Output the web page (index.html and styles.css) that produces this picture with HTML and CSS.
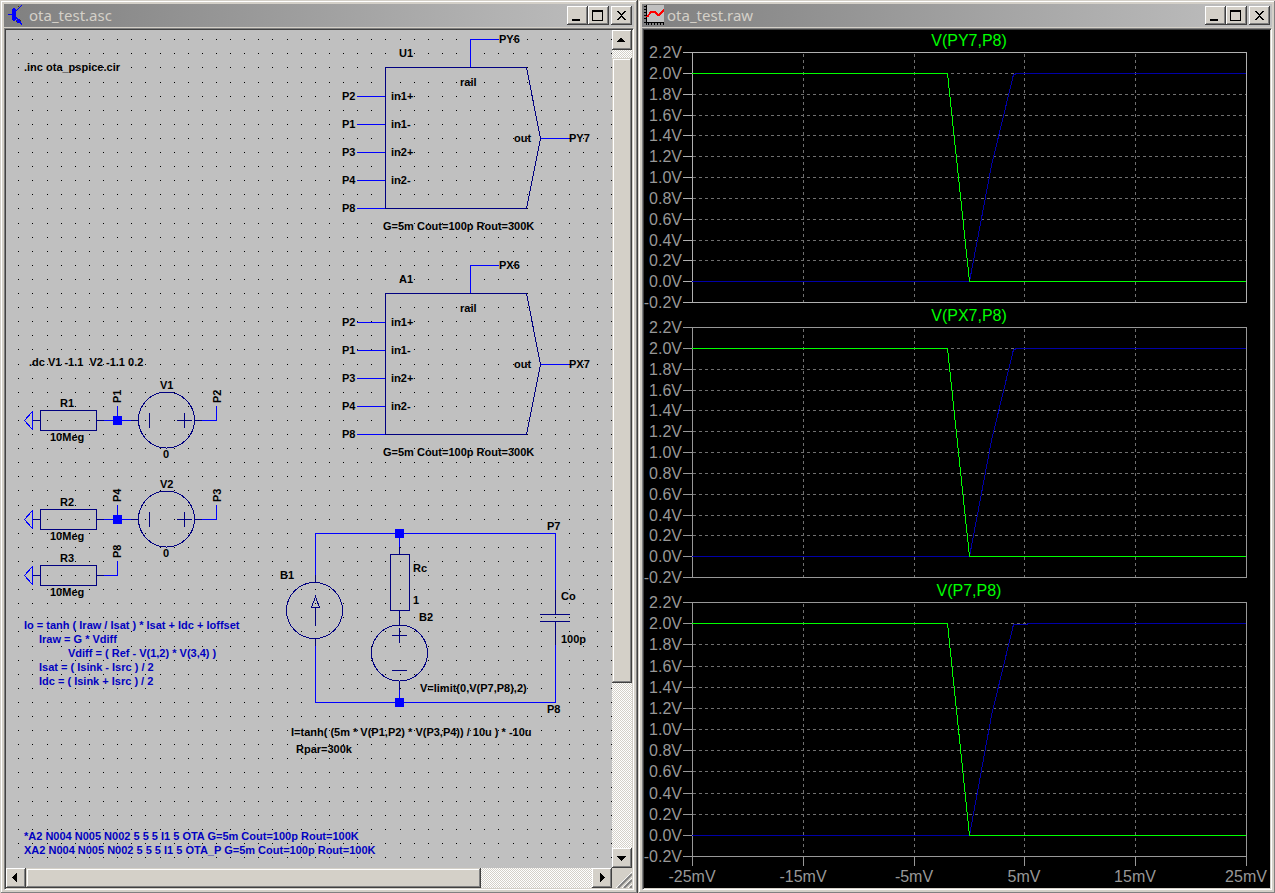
FILE: index.html
```html
<!DOCTYPE html>
<html lang="en">
<head>
    <meta charset="UTF-8">
    <meta name="viewport" content="width=device-width, initial-scale=1.0">
    <title>ota_test</title>
    <link rel="stylesheet" href="styles.css">
</head>
<body>

<div class="desktop">

    <!-- Schematic window -->
    <section class="window">
        <header class="titlebar">
            <svg class="app-icon" viewBox="0 0 20 21" shape-rendering="crispEdges">
                <path class="fill-blue" d="M2 9h4v1H2zM6 4h1V3h2v1h1v11H9v1H7v-1H6zM10 5h1V4h1V3h1V2h1V1h1V0h1v1h-1v1h-1v1h-1v1h-1v1h-1v1h-1zM10 12h1v1h1v1h2v1h1v3h1v2h-1v-1h-1v-1h-3v-1h-1v-2h1v-1h-1z"/>
                <path class="fill-dark" d="M12 1h1v1h-1zM14 15h1v1h-1zM10 16h1v1h-1z"/>
            </svg>
            <h1>ota_test.asc</h1>
            <button class="cap" aria-label="Minimize"><svg viewBox="0 0 21 19"><path d="M5 13h8v2H5z"/></svg></button>
            <button class="cap" aria-label="Maximize"><svg viewBox="0 0 21 19"><path d="M4 4h11v11H4zM5 6v8h9V6z" fill-rule="evenodd"/></svg></button>
            <button class="cap close" aria-label="Close"><svg viewBox="0 0 21 19"><path d="M6 5h2v1h1v1h1v1h1V7h1V6h1V5h2v1h-1v1h-1v1h-1v1h-1v1h1v1h1v1h1v1h1v1h-2v-1h-1v-1h-1v-1h-1v1H9v1H8v1H6v-1h1v-1h1v-1h1v-1h1V9H9V8H8V7H7V6H6z"/></svg></button>
        </header>
        <div class="client schematic">
            <svg class="sheet" viewBox="6 30 606 838" preserveAspectRatio="xMinYMin meet">
                <defs>
                    <g id="ota">
                        <path class="part" d="M385.5 67.5H526.5L540.5 138.5L526.5 208.5H385.5z"/>
                        <path class="wire" d="M357 96.5h28M357 124.5h28M357 152.5h28M357 180.5h28M357 208.5h28M470.5 67V39.5H499M541 138.5H570"/>
                        <text x="342" y="100">P2</text>
                        <text x="342" y="128">P1</text>
                        <text x="342" y="156">P3</text>
                        <text x="342" y="184">P4</text>
                        <text x="342" y="212">P8</text>
                        <text x="391" y="100">in1+</text>
                        <text x="391" y="128">in1-</text>
                        <text x="391" y="156">in2+</text>
                        <text x="391" y="184">in2-</text>
                        <text x="460" y="86">rail</text>
                        <text x="514" y="142">out</text>
                        <text x="383" y="230">G=5m Cout=100p Rout=300K</text>
                    </g>
                    <g id="resistor">
                        <path class="wire" d="M24.5 420.5L32.5 411.5V429.5z"/>
                        <path class="part" d="M33 420.5H40M40.5 410.5h56v20h-56zM97 420.5h7"/>
                        <text x="50" y="441">10Meg</text>
                    </g>
                    <g id="source">
                        <circle class="part" cx="166.5" cy="420" r="28"/>
                        <path class="part" d="M131 420.5h7M149.5 413v15M184.5 413v15M177 420.5h15M195 420.5h7"/>
                        <path class="wire" d="M104 420.5h27M117.5 406v11M202 420.5h14.5V406"/>
                        <path class="fill-blue" d="M113 416h9v9h-9z"/>
                        <text x="163" y="458">0</text>
                    </g>
                </defs>

                <g id="dots"></g>

                <use href="#ota"/>
                <text x="399" y="57">U1</text>
                <text x="499" y="43">PY6</text>
                <text x="569" y="142">PY7</text>

                <use href="#ota" y="226"/>
                <text x="399" y="283">A1</text>
                <text x="499" y="269">PX6</text>
                <text x="569" y="368">PX7</text>

                <text x="24" y="71">.inc ota_pspice.cir</text>
                <text x="29" y="366">.dc V1 -1.1  V2 -1.1 0.2</text>

                <use href="#resistor"/>
                <use href="#source"/>
                <text x="60" y="407">R1</text>
                <text x="160" y="389">V1</text>
                <text transform="translate(121 403) rotate(-90)">P1</text>
                <text transform="translate(221 403) rotate(-90)">P2</text>

                <use href="#resistor" y="99"/>
                <use href="#source" y="99"/>
                <text x="60" y="506">R2</text>
                <text x="160" y="488">V2</text>
                <text transform="translate(121 502) rotate(-90)">P4</text>
                <text transform="translate(221 502) rotate(-90)">P3</text>

                <use href="#resistor" y="155"/>
                <path class="wire" d="M104 575.5H117.5V561"/>
                <text x="60" y="562">R3</text>
                <text transform="translate(121 558) rotate(-90)">P8</text>

                <!-- behavioral model loop -->
                <path class="wire" d="M315.5 575V533.5H555.5V590M555.5 645V702.5H315.5V645M399.5 533v14M399.5 690v12"/>
                <circle class="part" cx="314.5" cy="610.5" r="28"/>
                <path class="part" d="M315.5 575v7M315.5 639v7M315.5 626V607M315.5 596.5L311.5 607.5H319.5z"/>
                <path class="part" d="M399.5 547v7M390.5 554.5h19v56h-19zM399.5 611v14M399.5 681v9"/>
                <circle class="part" cx="399.5" cy="653" r="28"/>
                <path class="part" d="M392 635.5h15M399.5 628v15M392 670.5h15"/>
                <path class="part" d="M555.5 590v24M540 614.5h30M540 621.5h30M555.5 622v23"/>
                <path class="fill-blue" d="M395 529h9v9h-9zM395 698h9v9h-9z"/>
                <text x="280" y="579">B1</text>
                <text x="413" y="572">Rc</text>
                <text x="413" y="604">1</text>
                <text x="419" y="621">B2</text>
                <text x="547" y="530">P7</text>
                <text x="547" y="713">P8</text>
                <text x="561" y="600">Co</text>
                <text x="561" y="643">100p</text>
                <text x="420" y="692">V=limit(0,V(P7,P8),2)</text>
                <text x="291" y="736">I=tanh( (5m * V(P1,P2) * V(P3,P4)) / 10u ) * -10u</text>
                <text x="296" y="753">Rpar=300k</text>

                <g class="comment">
                    <text x="24" y="629">Io = tanh ( Iraw / Isat ) * Isat + Idc + Ioffset</text>
                    <text x="39" y="643">Iraw = G * Vdiff</text>
                    <text x="68" y="657">Vdiff = ( Ref - V(1,2) * V(3,4) )</text>
                    <text x="39" y="671">Isat = ( Isink - Isrc ) / 2</text>
                    <text x="39" y="685">Idc = ( Isink + Isrc ) / 2</text>
                    <text x="24" y="840">*A2 N004 N005 N002 5 5 5 I1 5 OTA G=5m Cout=100p Rout=100K</text>
                    <text x="24" y="854">XA2 N004 N005 N002 5 5 5 I1 5 OTA_P G=5m Cout=100p Rout=100K</text>
                </g>
            </svg>
            <div class="scroll vertical">
                <button class="arrow" aria-label="Scroll up"><svg viewBox="0 0 20 20"><path d="M9 8h1v1h1v1h1v1h1v1H5v-1h1v-1h1V9h1V8z"/></svg></button>
                <div class="track"><div class="thumb"></div></div>
                <button class="arrow" aria-label="Scroll down"><svg viewBox="0 0 20 20"><path d="M5 8h9v1h-1v1h-1v1h-1v1h-1v1H9v-1H8v-1H7v-1H6V9H5z"/></svg></button>
            </div>
            <div class="scroll horizontal">
                <button class="arrow" aria-label="Scroll left"><svg viewBox="0 0 20 20"><path d="M11 5v9h-1v-1H9v-1H8v-1H7v-1H6V9h1V8h1V7h1V6h1V5z"/></svg></button>
                <div class="track"><div class="thumb"></div></div>
                <button class="arrow" aria-label="Scroll right"><svg viewBox="0 0 20 20"><path d="M8 5v9h1v-1h1v-1h1v-1h1v-1h1V9h-1V8h-1V7h-1V6H9V5z"/></svg></button>
            </div>
            <svg class="grip" viewBox="0 0 20 20">
                <path class="grip-light" d="M4 20L20 4M10 20L20 10M16 20L20 16"/>
                <path class="grip-dark" d="M6 20L20 6M12 20L20 12M18 20L20 18"/>
            </svg>
        </div>
    </section>

    <!-- Waveform window -->
    <section class="window">
        <header class="titlebar">
            <svg class="app-icon" viewBox="0 0 20 21" shape-rendering="crispEdges">
                <path class="fill-silver" d="M2 0h18v17H2z"/>
                <path d="M2 0h1v20H2zM0 1h2v1H0zM0 4h2v1H0zM0 7h2v1H0zM0 10h2v1H0zM0 13h2v1H0zM0 17h20v1H0zM4 18h1v2H4zM7 18h1v2H7zM10 18h1v2h-1zM13 18h1v2h-1zM16 18h1v2h-1zM19 18h1v2h-1z"/>
                <path class="curve" d="M3 12L7 7h4l3 3h1l5-5"/>
            </svg>
            <h1>ota_test.raw</h1>
            <button class="cap" aria-label="Minimize"><svg viewBox="0 0 21 19"><path d="M5 13h8v2H5z"/></svg></button>
            <button class="cap" aria-label="Maximize"><svg viewBox="0 0 21 19"><path d="M4 4h11v11H4zM5 6v8h9V6z" fill-rule="evenodd"/></svg></button>
            <button class="cap close" aria-label="Close"><svg viewBox="0 0 21 19"><path d="M6 5h2v1h1v1h1v1h1V7h1V6h1V5h2v1h-1v1h-1v1h-1v1h-1v1h1v1h1v1h1v1h1v1h-2v-1h-1v-1h-1v-1h-1v1H9v1H8v1H6v-1h1v-1h1v-1h1v-1h1V9H9V8H8V7H7V6H6z"/></svg></button>
        </header>
        <div class="client waves">
            <svg id="plots" viewBox="644 30 626 858" preserveAspectRatio="xMinYMin meet"></svg>
        </div>
    </section>

</div>

<script>
    // schematic grid
    var dots = '';
    for (var row = 0; row < 59; row++) {
        for (var col = 0; col < 43; col++) {
            var dx = Math.floor(18.8 + col * 14.12);
            var dy = Math.floor(39.75 + row * 14.1);
            dots += 'M' + dx + ' ' + dy + 'h1v1h-1z';
        }
    }
    document.getElementById('dots').innerHTML = '<path class="dots" d="' + dots + '"/>';

    // waveform panes, top / bottom are the 2.2V and -0.2V lines
    var panes = [
        { title: 'V(PY7,P8)', top: 52, bottom: 302, cls: 'active', settle: 1015 },
        { title: 'V(PX7,P8)', top: 327, bottom: 577, cls: '', settle: 1015 },
        { title: 'V(P7,P8)', top: 602, bottom: 856, cls: '', settle: 1027 }
    ];
    var xTicks = [692, 803, 914, 1024, 1135, 1246];
    var xLabels = ['-25mV', '-15mV', '-5mV', '5mV', '15mV', '25mV'];
    var left = xTicks[0], right = xTicks[5];

    function drawPane(pane) {
        var step = (pane.bottom - pane.top) / 12;
        var ys = [];
        var grid = '', axis = '', labels = '';
        for (var i = 0; i <= 12; i++) {
            var y = Math.round(pane.top + i * step) + 0.5;
            ys.push(y);
            axis += 'M683 ' + y + 'H' + left;
            if (i > 0 && i < 12) {
                grid += 'M' + (left + 1) + ' ' + y + 'H' + right;
            }
            labels += '<text class="label end" x="682" y="' + (y + 5.5) + '">' + ((11 - i) / 5).toFixed(1) + 'V</text>';
        }
        for (var j = 1; j < 5; j++) {
            grid += 'M' + (xTicks[j] + 0.5) + ' ' + (pane.top + 2) + 'V' + pane.bottom;
        }
        axis += 'M' + (left + 0.5) + ' ' + ys[0] + 'H' + (right + 0.5) + 'V' + ys[12] + 'H' + (left + 0.5) + 'z';

        var hi = ys[1], lo = ys[11], mid = pane.top + 113.5;
        var blue = 'M' + left + ' ' + lo + 'H969.5L991.5 ' + mid + 'L1013.5 ' + (hi + 1) + 'H' + pane.settle + 'V' + hi + 'H' + right;
        var green = 'M' + left + ' ' + hi + 'H947.5L969.5 ' + lo + 'H' + right;

        return '<g class="' + pane.cls + '">' +
            '<path class="grid" d="' + grid + '"/>' +
            '<path class="axis" d="' + axis + '"/>' +
            '<path class="trace blue" d="' + blue + '"/>' +
            '<path class="trace green" d="' + green + '"/>' +
            labels +
            '<text class="heading" x="969" y="' + (pane.top - 6) + '">' + pane.title + '</text></g>';
    }

    var out = panes.map(drawPane).join('');
    for (var k = 0; k < xTicks.length; k++) {
        out += '<path class="axis" d="M' + (xTicks[k] + 0.5) + ' 856V866"/>';
        out += '<text class="label middle" x="' + xTicks[k] + '" y="882">' + xLabels[k] + '</text>';
    }
    document.getElementById('plots').innerHTML = out;
</script>

</body>
</html>
```

FILE: styles.css
```css
* {
    box-sizing: border-box;
}
body {
    margin: 0;
    height: 100vh;
    overflow: hidden;
    background: #d4d0c8;
    font-family: "Liberation Sans", Arial, sans-serif;
}
/* the windows run one pixel past the screen edge */
.desktop {
    display: grid;
    grid-template-columns: 1fr 1fr;
    width: calc(100% + 1px);
    height: calc(100% + 1px);
}
.window {
    display: flex;
    flex-direction: column;
    min-width: 0;
    padding: 4px;
    background: #d4d0c8;
    box-shadow: inset -1px -1px #404040, inset 1px 1px #d4d0c8, inset -2px -2px #808080, inset 2px 2px #fff;
}
.titlebar {
    display: flex;
    align-items: center;
    height: 23px;
    margin-bottom: 1px;
    padding: 0 2px;
    background: linear-gradient(to right, #808080, #c0c0c0);
}
.titlebar h1 {
    flex: 1;
    margin: 0 0 0 3px;
    font: 15px/23px "Noto Sans", sans-serif;
    color: #d4d0c8;
}
.app-icon {
    width: 20px;
    height: 21px;
}
.cap,
.arrow {
    display: block;
    padding: 0;
    border: 0;
    background: #d4d0c8;
    box-shadow: inset -1px -1px #404040, inset 1px 1px #fff, inset -2px -2px #808080;
}
.cap {
    width: 21px;
    height: 19px;
}
.cap.close {
    margin-left: 2px;
}
.arrow {
    width: 20px;
    height: 20px;
}
.cap svg,
.arrow svg {
    display: block;
    shape-rendering: crispEdges;
}
.client {
    flex: 1;
    min-height: 0;
    border: 1px solid;
    border-color: #808080 #fff #fff #808080;
    box-shadow: inset 1px 1px #404040, inset -1px -1px #d4d0c8;
    padding: 1px;
}
.schematic {
    display: grid;
    grid-template-columns: 1fr 20px;
    grid-template-rows: 1fr 20px;
}
.sheet {
    width: 100%;
    height: 100%;
    min-height: 0;
    background: #c0c0c0;
    shape-rendering: crispEdges;
}
.sheet text {
    font-size: 11px;
    font-weight: bold;
    white-space: pre;
}
.sheet .comment {
    fill: #0000c0;
}
.part,
.wire {
    fill: none;
    stroke: #000080;
}
.wire {
    stroke: #0000ff;
}
.fill-blue {
    fill: #0000ff;
}
.fill-dark {
    fill: #404000;
}
.fill-silver {
    fill: #c0c0c0;
}
.curve {
    fill: none;
    stroke: #ff0000;
    stroke-width: 2;
}

.scroll {
    display: flex;
}
.vertical {
    flex-direction: column;
}
.track {
    flex: 1;
    display: grid;
    background: conic-gradient(#fff 25%, #d4d0c8 0 50%, #fff 0 75%, #d4d0c8 0) 0 0 / 2px 2px;
}
.vertical .track {
    grid-template-rows: 8fr 625fr 165fr;
}
.vertical .thumb {
    grid-row: 2;
}
.horizontal .track {
    grid-template-columns: 455fr 111fr;
}
.thumb {
    background: #d4d0c8;
    box-shadow: inset -1px -1px #404040, inset 1px 1px #d4d0c8, inset -2px -2px #808080, inset 2px 2px #fff;
}
.grip {
    width: 20px;
    height: 20px;
    background: #d4d0c8;
}
.grip-light {
    stroke: #fff;
}
.grip-dark {
    stroke: #808080;
    stroke-width: 2;
}

.waves {
    background: #000;
}
#plots {
    display: block;
    width: 100%;
    height: 100%;
    shape-rendering: crispEdges;
}
#plots text {
    font-size: 16px;
}
.label {
    fill: #989898;
}
.end {
    text-anchor: end;
}
.middle {
    text-anchor: middle;
}
.heading {
    fill: #00ff00;
    text-anchor: middle;
}
.axis {
    fill: none;
    stroke: #989898;
}
.active .axis {
    stroke: #b0b0b0;
}
.grid {
    fill: none;
    stroke: #707070;
    stroke-dasharray: 3 3;
}
.trace {
    fill: none;
}
.blue {
    stroke: #0000a8;
}
.green {
    stroke: #00ff00;
}
```
